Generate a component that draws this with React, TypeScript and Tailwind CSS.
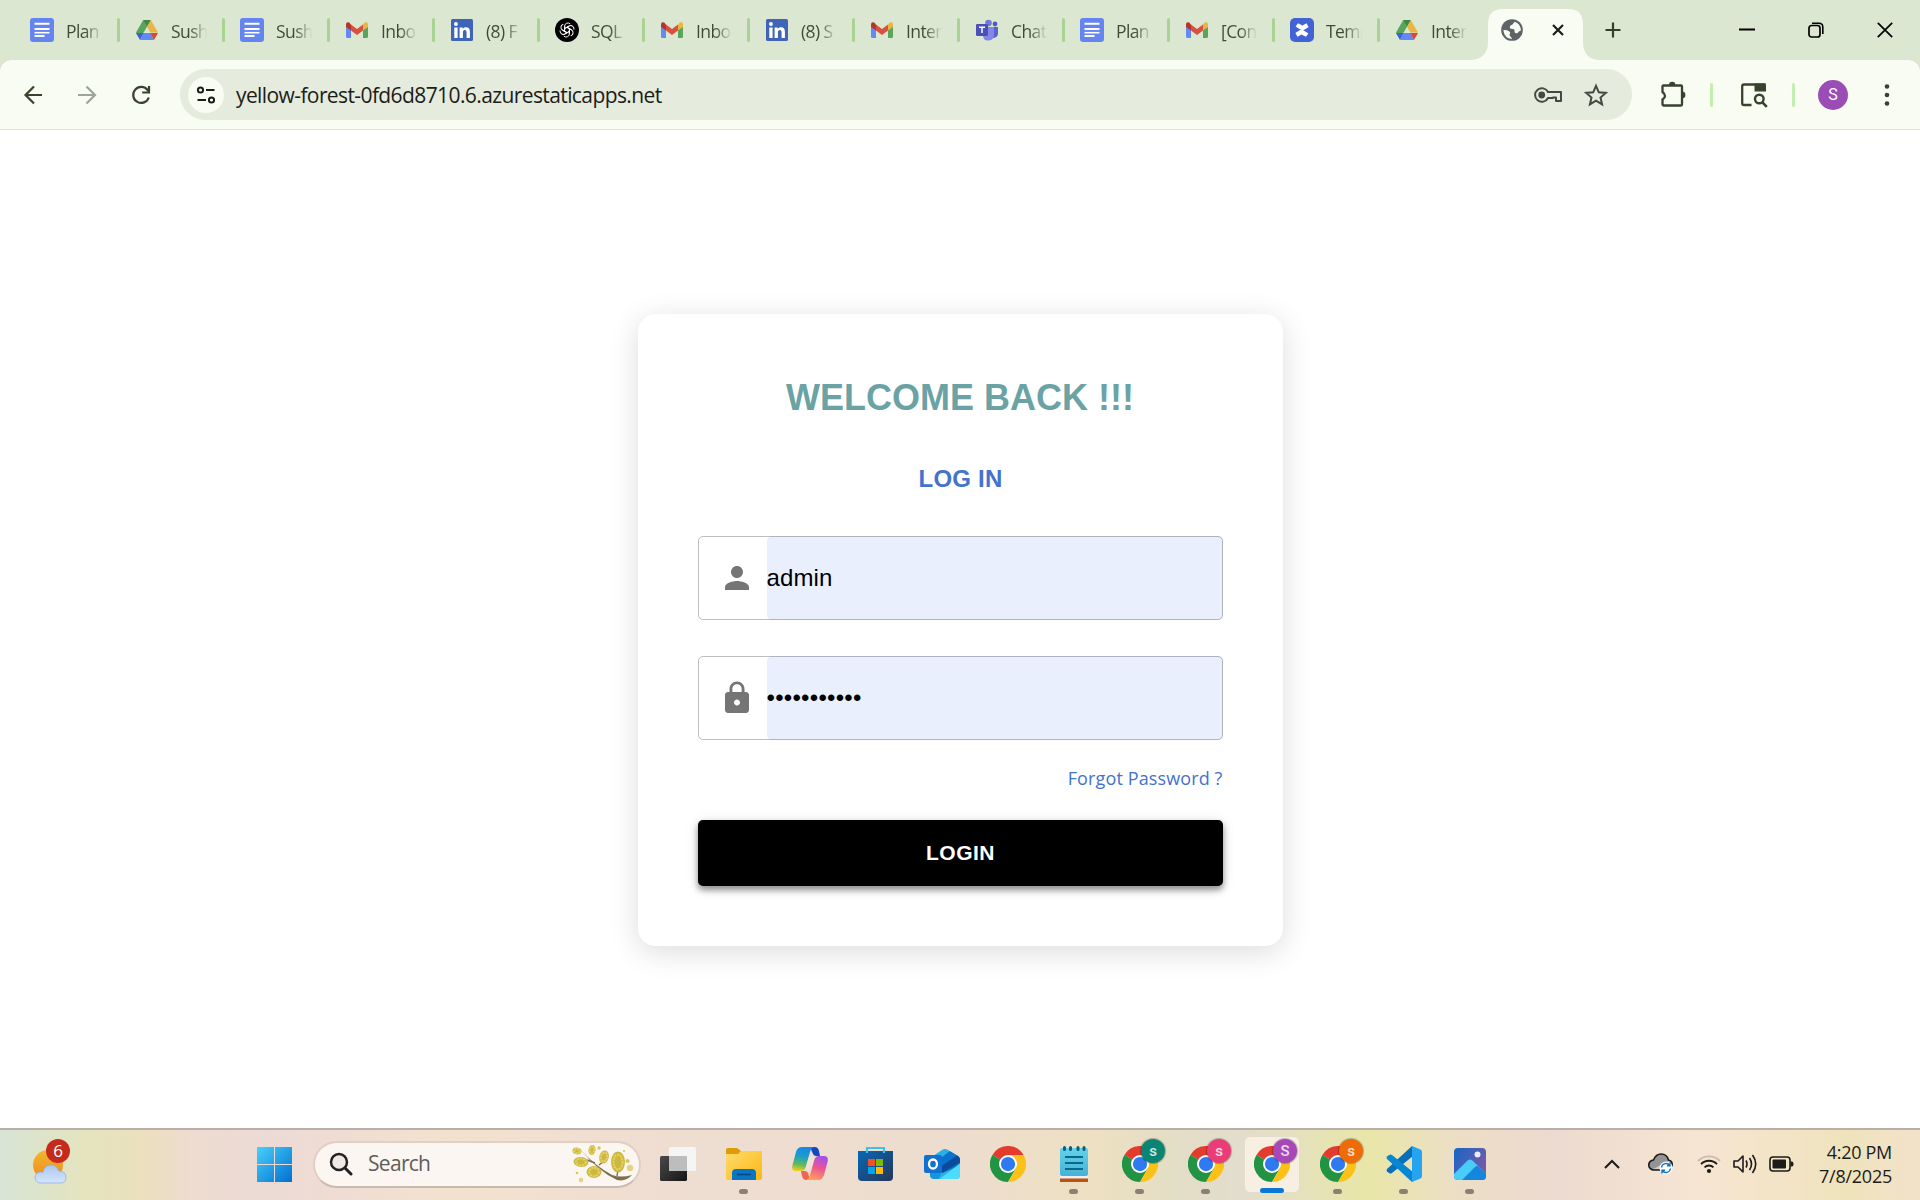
import React from "react";

const Docs = () => (
  <svg width="24" height="24" viewBox="0 0 24 24"><rect width="24" height="24" rx="3" fill="#6485f0" /><path d="M4.500 5.800h15M4.500 11h15M4.500 18h10" stroke="#fff" strokeWidth="2" /><path d="M4.500 14.700h15" stroke="#fff" strokeWidth="1.600" /></svg>
);
const Drive = () => (
  <svg width="24" height="24" viewBox="0 0 24 24">
    <path d="M8.200 2 12 8.800 4.900 21 1 14.500z" fill="#5aa55c" />
    <path d="M8 2h8l-4 7z" fill="#3f8a43" /><path d="M15.800 2 23 14.500h-7.800L12 8.800z" fill="#eab543" />
    <path d="M1 15h7.800L5 22 1 15z" fill="#3c62d8" /><path d="M8.500 15H15.500L19 22H5z" fill="#6389f4" /><path d="M15.200 15H23l-4 7z" fill="#d9483b" />
  </svg>
);
const Gmail = () => (
  <svg width="24" height="24" viewBox="0 0 24 24">
    <path d="M1 8v10.500q0 1.500 1.500 1.500H6V11z" fill="#6389f4" /><path d="M23 8v10.500q0 1.500-1.500 1.500H18V11z" fill="#5aa55c" />
    <path d="M18 6.500 19.800 4.500Q23 3.400 23 6.500V9l-5 3.500z" fill="#eab543" /><path d="M6 6.500 12 11l6-4.500v6L12 17l-6-4.500z" fill="#d9503f" />
    <path d="M1 9V6.500Q1 3.400 4.200 4.500L6 6.500v6z" fill="#b3352c" />
  </svg>
);
const LinkedIn = () => (
  <svg width="24" height="24" viewBox="0 0 24 24"><rect x="1" y="1" width="22" height="22" rx="1.500" fill="#4065b8" /><path d="M4.300 9.500h3.300V20H4.300zM9.600 9.500h3.100v1.400c.7-1.100 1.800-1.700 3.200-1.700 3 0 4 1.800 4 4.800v6h-3.300v-5.500c0-1.600-.5-2.500-1.700-2.500-1.400 0-2 1-2 2.600V20H9.600z" fill="#fff" /><circle cx="5.950" cy="6" r="1.950" fill="#fff" /></svg>
);
const OpenAI = () => (
  <svg width="24" height="24" viewBox="0 0 24 24"><circle cx="12" cy="12" r="12" fill="#000" />
    <g fill="none" stroke="#fff" strokeWidth="1">
      {[0, 60, 120, 180, 240, 300].map((a) => <path key={a} transform={`rotate(${a} 12 12)`} d="M9.600 13.400V8.200a3.300 3.300 0 0 1 5.600-2.300M9.600 10.600 14.300 8" />)}
    </g></svg>
);
const Teams = () => (
  <svg width="24" height="24" viewBox="0 0 24 24"><circle cx="13.500" cy="5" r="3.300" fill="#7378dc" /><circle cx="20" cy="6" r="2.400" fill="#5059c9" />
    <path d="M17 9h6v7q-1 4-5 4z" fill="#5b62cd" /><path d="M8 9h11v8q0 5-5.500 5.500T8 17z" fill="#8388e8" />
    <rect x="1" y="6" width="12" height="12" rx="1.200" fill="#4b50b4" /><path d="M4 9.200h6M7 9.200V15" stroke="#fff" strokeWidth="1.500" /></svg>
);
const Confluence = () => (
  <svg width="24" height="24" viewBox="0 0 24 24"><rect width="24" height="24" rx="5" fill="#4263d6" /><path d="M5.600 8.600 8 5.200l4.500 2.300 4-2.200 2.100 3.600-3.800 2.600q-2.600 1.500-5.300-.4z" fill="#fff" /><path d="M18.400 15.400 16 18.800l-4.500-2.300-4 2.200-2.100-3.600 3.800-2.600q2.600-1.500 5.300.4z" fill="#fff" /></svg>
);
const Globe = () => (
  <svg width="26" height="26" viewBox="0 0 24 24"><circle cx="12" cy="12" r="10" fill="#5f6368" /><path d="M4 12q3.500-.2 5.200 1.200 2 1.300.3 3.300l2.500 3.300v.6Q5 20 4 12zM14.500 4.300q5.500 2 5.700 8.200-2.200.6-3 2.300-1.800.7-3-.9.800-2.500-1.400-2.800l-2.600-.4q-.8-3 2-3.500z" fill="#f8fcf2" /></svg>
);

const tabs: [() => React.ReactElement, string][] = [
  [Docs, "Plan"], [Drive, "Sush"], [Docs, "Sush"], [Gmail, "Inbo"], [LinkedIn, "(8) F"], [OpenAI, "SQL"], [Gmail, "Inbo"],
  [LinkedIn, "(8) S"], [Gmail, "Inter"], [Teams, "Chat"], [Docs, "Plan"], [Gmail, "[Con"], [Confluence, "Temp"], [Drive, "Inter"],
];

function TabStrip() {
  return (
    <div className="flex h-[60px] bg-[#dbe7d0] pl-[15px]">
      {tabs.map(([Icon, label], i) => (
        <div key={i} className="flex h-[60px] w-[105px] shrink-0 items-center pl-[15px]">
          <Icon />
          <div className="ml-3 w-[37px] overflow-hidden whitespace-nowrap bg-linear-to-r from-[#3d4a36] from-50% to-transparent to-98% bg-clip-text pt-[2px] text-[17.5px] leading-6 tracking-[-0.6px] text-transparent">{label}</div>
          {i < 13 && <div className="ml-[14px] h-6 w-[3px] rounded-sm bg-[#a9d392]" />}
        </div>
      ))}
      <svg className="-ml-[13px] shrink-0" width="126" height="60" viewBox="0 0 126 60"><path d="M0 60Q16 58 16 42V24Q16 9 31 9H96Q111 9 111 24V42Q111 58 126 60z" fill="#f8fcf2" /></svg>
      <div className="relative -ml-[126px] flex w-[126px] items-center pl-[27px]">
        <Globe />
        <svg className="ml-[26px]" width="14" height="14" viewBox="0 0 14 14"><path d="m2 2 10 10M12 2 2 12" stroke="#1b1d19" strokeWidth="2.200" /></svg>
      </div>
      <div className="flex grow items-center pl-[6px]">
        <svg width="18" height="18" viewBox="0 0 18 18"><path d="M9 1.500v15M1.500 9h15" stroke="#333f2d" strokeWidth="2.200" /></svg>
        <svg className="ml-[117px]" width="16" height="16" viewBox="0 0 16 16"><path d="M0 7.500h16" stroke="#000" strokeWidth="2" /></svg>
        <svg className="ml-[53px]" width="16" height="16" viewBox="0 0 16 16"><rect x="1" y="3.500" width="11" height="11.500" rx="2.500" fill="none" stroke="#000" strokeWidth="1.700" /><path d="M4 1.200h7q3.800 0 3.800 3.800v7" fill="none" stroke="#000" strokeWidth="1.600" /></svg>
        <svg className="ml-[53px]" width="16" height="16" viewBox="0 0 16 16"><path d="m.8.8 14.400 14.400M15.200.8.8 15.200" stroke="#000" strokeWidth="1.700" /></svg>
      </div>
    </div>
  );
}

function Toolbar() {
  return (
    <div className="bg-[#dbe7d0]">
      <div className="flex h-[70px] items-center rounded-t-[12px] border-b border-[#dee4d7] bg-[#f8fcf2] pl-[22px]">
        <svg width="24" height="24" viewBox="0 0 24 24"><path d="M20 12H4M12 3.500 3.500 12l8.500 8.500" fill="none" stroke="#37432f" strokeWidth="2.200" /></svg>
        <svg className="ml-[29px]" width="24" height="24" viewBox="0 0 24 24"><path d="M3 12h16M11.500 3.500 20 12l-8.500 8.500" fill="none" stroke="#9da498" strokeWidth="2.200" /></svg>
        <svg className="ml-[30px]" width="24" height="24" viewBox="0 0 24 24"><path d="M19.800 14.500a8 8 0 1 1-1.500-7.800l1 1.200M20 3v6.500h-6.800" fill="none" stroke="#37432f" strokeWidth="2.200" /></svg>
        <div className="ml-[27px] flex h-[51px] w-[1452px] items-center rounded-full bg-[#e5ebdd] pl-2">
          <div className="flex size-9 items-center justify-center rounded-full bg-[#f8fcf2]">
            <svg width="20" height="20" viewBox="0 0 20 20" fill="none" stroke="#1b1d19" strokeWidth="2"><circle cx="4.500" cy="5" r="2.600" /><path d="M10 5h8.500M1.500 15H10" /><circle cx="15.500" cy="15" r="2.600" /></svg>
          </div>
          <span className="ml-3 w-[1298px] whitespace-nowrap text-[21px] leading-7 tracking-[-0.6px] text-[#1b1d19]">yellow-forest-0fd6d8710.6.azurestaticapps.net</span>
          <svg className="shrink-0" width="28" height="20" viewBox="0 0 28 20" fill="none" stroke="#454943" strokeWidth="2"><path d="M14 7h13v9h-5v-3.500h-3V13h-5a6.800 6.800 0 1 1 0-6z" strokeLinejoin="round" /><circle cx="7.700" cy="10" r="2.400" fill="#454943" /></svg>
          <svg className="ml-[22px] shrink-0" width="24" height="24" viewBox="0 0 24 24"><path d="m12 2.800 2.800 6.500 7 .6-5.300 4.600 1.600 6.900-6.100-3.700-6.100 3.700 1.600-6.900L2.200 9.900l7-.6z" fill="none" stroke="#454943" strokeWidth="2" /></svg>
        </div>
        <svg className="ml-[27px]" width="27" height="27" viewBox="0 0 27 27"><path d="M4.500 4.500h17.500q1 0 1 1v18q0 1-1 1H4.500q-1 0-1-1v-5q5-3.500 0-7.500v-6q0-.5 1-.5z" fill="none" stroke="#37432f" strokeWidth="2.300" /><path d="M10 4a3.200 3.200 0 0 1 6.400 0zM23 10.500a3.200 3.200 0 0 1 0 6.800z" fill="#37432f" /></svg>
        <div className="ml-6 h-6 w-[3px] rounded bg-[#c4edb0]" />
        <svg className="ml-[27px]" width="28" height="26" viewBox="0 0 28 26"><path d="M11.500 23H4q-1.800 0-1.800-1.800V4.300Q2.200 2.500 4 2.500h20.500V8" fill="none" stroke="#37432f" strokeWidth="2.300" /><path d="M14.500 1.400H24q2 0 2 2v6H14.500z" fill="#37432f" /><circle cx="19.300" cy="17" r="4.300" fill="none" stroke="#37432f" strokeWidth="2.400" /><path d="m22.200 20.200 4.600 4.600" stroke="#37432f" strokeWidth="2.600" /></svg>
        <div className="ml-[24px] h-6 w-[3px] rounded bg-[#c4edb0]" />
        <div className="ml-[23px] flex size-[30px] items-center justify-center rounded-full bg-[#9a4db5] font-['Roboto'] text-[16px] text-white">S</div>
        <svg className="ml-[35px]" width="8" height="24" viewBox="0 0 8 24" fill="#37432f"><circle cx="4" cy="3.500" r="2.300" /><circle cx="4" cy="12" r="2.300" /><circle cx="4" cy="20.500" r="2.300" /></svg>
      </div>
    </div>
  );
}

function Field({ icon, children }: { icon: React.ReactNode; children: React.ReactNode }) {
  return (
    <div className="relative flex h-[84px] font-['Liberation_Sans',sans-serif]">
      <div className="flex w-[69px] items-center pl-[21px]">{icon}</div>
      <div className="flex grow items-center rounded-[5px] bg-[#e9effd] text-[24px] tracking-[0.1px] text-black">{children}</div>
      <div className="absolute inset-0 rounded-[5px] border border-black/25" />
    </div>
  );
}

function LoginCard() {
  return (
    <div className="flex h-[632px] w-[645px] flex-col rounded-[18px] bg-white px-[60px] pt-[60px] shadow-[0_6px_30px_rgba(0,0,0,0.14)]">
      <h1 className="text-center font-['Liberation_Sans',sans-serif] text-[36px] font-bold leading-[48px] text-[#6ba3a4]">WELCOME BACK !!!</h1>
      <h2 className="mt-[39px] pl-px text-center font-['Liberation_Sans',sans-serif] text-[24px] font-bold leading-9 tracking-[0.2px] text-[#4472cd]">LOG IN</h2>
      <div className="mt-[39px] flex flex-col gap-9">
        <Field icon={<svg width="36" height="36" viewBox="0 0 24 24" fill="#757575"><path d="M12 12c2.210 0 4-1.790 4-4s-1.790-4-4-4-4 1.790-4 4 1.790 4 4 4m0 2c-2.670 0-8 1.340-8 4v2h16v-2c0-2.660-5.330-4-8-4" /></svg>}>admin</Field>
        <Field icon={<svg width="36" height="36" viewBox="0 0 24 24" fill="#757575"><path d="M18 8h-1V6c0-2.760-2.240-5-5-5S7 3.240 7 6v2H6c-1.100 0-2 .9-2 2v10c0 1.100.9 2 2 2h12c1.100 0 2-.9 2-2V10c0-1.100-.9-2-2-2m-6 9c-1.100 0-2-.9-2-2s.9-2 2-2 2 .9 2 2-.9 2-2 2M8.900 8V6c0-1.710 1.390-3.100 3.100-3.100s3.100 1.390 3.100 3.100v2z" /></svg>}>
          <span className="tracking-[0.250px]">•••••••••••</span>
        </Field>
      </div>
      <a className="mt-[24px] self-end whitespace-nowrap text-[18px] leading-7 tracking-[0.12px] text-[#4472cd]">Forgot Password ?</a>
      <button className="mt-[28px] h-[66px] shrink-0 rounded-[5px] bg-black pb-px pl-px font-['Liberation_Sans',sans-serif] text-[21px] font-bold tracking-[0.5px] text-white shadow-[0_4px_6px_rgba(0,0,0,0.4),0_2px_14px_rgba(0,0,0,0.12)]">LOGIN</button>
    </div>
  );
}

const Chrome = () => (
  <svg width="36" height="36" viewBox="0 0 48 48">
    <path d="M24 24 3.200 12A24 24 0 0 1 44.800 12z" fill="#e33b2e" /><path d="M24 24 3.200 12A24 24 0 0 0 24 48l10.400-18z" fill="#229342" /><path d="M24 12h20.800A24 24 0 0 1 24 48l10.400-18z" fill="#fbc116" />
    <circle cx="24" cy="24" r="12" fill="#fff" /><circle cx="24" cy="24" r="9.500" fill="#2f7af0" />
  </svg>
);

function ProfileChrome({ color, initial = "s" }: { color: string; initial?: string }) {
  return (
    <div className="relative size-9">
      <Chrome />
      <div className="absolute -top-[7px] left-[19px] flex size-6 items-center justify-center rounded-full font-['Roboto'] text-[15px] font-medium text-white/80 shadow-[0_0_1px_1px_rgba(0,0,0,0.25)]" style={{ backgroundColor: color }}>{initial}</div>
    </div>
  );
}

const Branch = () => {
  const blobs: [number, number, number, number, number][] = [[5, 6, 4.5, 3.3, 10], [20, 5, 3.5, 5, 10], [32, 12, 4.7, 6.7, 15], [9, 17, 7.5, 5, 5], [22, 27, 7.5, 6, 0], [46, 17, 7, 10.5, 0]];
  return (
    <svg width="62" height="38" viewBox="0 0 62 38">
      <path d="M8 4Q22 20 40 30q9 3 20 0-6 7-15 5Q27 27 8 4z" fill="#7d6f4a" /><path d="M15 15l8 3M22 23l-4 3M27 20l5-4M45 31l1-6" stroke="#7d6f4a" strokeWidth="1.400" />
      {blobs.map(([x, y, a, b, r], i) => (
        <g key={i} transform={`rotate(${r} ${x} ${y})`}>
          <ellipse cx={x} cy={y} rx={a} ry={b} fill="#cdb73f" />
          <ellipse cx={x} cy={y} rx={a * 0.65} ry={b * 0.7} fill="none" stroke="#e2d268" strokeWidth="2" strokeDasharray="2.200 .8" />
        </g>
      ))}
      <g fill="#d8c553"><circle cx="58" cy="23" r="3.200" opacity=".7" /><circle cx="55.500" cy="16" r="2" /><circle cx="27" cy="3" r="1.700" /><circle cx="9" cy="35" r="2.300" opacity=".7" /><circle cx="5" cy="28" r="1.300" /><circle cx="52" cy="6" r="1" /></g>
    </svg>
  );
};

const TaskView = () => (
  <svg width="36" height="36" viewBox="0 0 36 36"><defs><linearGradient id="tv" x1="0" y1="0" x2="1" y2="1"><stop stopColor="#4a4a4a" /><stop offset="1" stopColor="#161616" /></linearGradient></defs>
    <rect y="10" width="27" height="25" rx="1.500" fill="url(#tv)" /><rect x="9" y="1" width="27" height="24" rx="1.500" fill="#f5f5f5" /><path d="M9 10h18v15H9z" fill="#bdbdbd" /></svg>
);
const Folder = () => (
  <svg width="36" height="36" viewBox="0 0 36 36"><defs><linearGradient id="fo" x2="1" y2="1"><stop stopColor="#ffdc70" /><stop offset="1" stopColor="#fbb710" /></linearGradient></defs>
    <path d="M0 4q0-2 2-2h9l4 3h19q2 0 2 2v6H0z" fill="#df9b05" /><path d="M0 8h12l3-3h19q2 0 2 2v25q0 2-2 2H2q-2 0-2-2z" fill="url(#fo)" /><path d="M6 34v-7q0-4 4-4h16q4 0 4 4v7z" fill="#0b75c4" /><path d="M11 28.500h14" stroke="#0a477e" strokeWidth="1.600" /></svg>
);
const Copilot = () => (
  <svg width="36" height="36" viewBox="0 0 36 36"><defs>
    <linearGradient id="cp1" x1=".5" y1="0" x2=".35" y2="1"><stop stopColor="#1688e8" /><stop offset=".4" stopColor="#1b9fc8" /><stop offset=".75" stopColor="#65bb58" /><stop offset="1" stopColor="#f3cd20" /></linearGradient>
    <linearGradient id="cp2" x1=".7" y1="0" x2=".4" y2="1"><stop stopColor="#a050f0" /><stop offset=".5" stopColor="#ed5592" /><stop offset="1" stopColor="#ffa055" /></linearGradient></defs>
    <path d="M18 1h5q3 0 4 4l1 5h-4q-2 0-3-2z" fill="#1846c0" /><path d="M18 34h-4q-3 0-4-4l-1-5h4q2 0 3 2z" fill="#ef6650" />
    <path d="M10 1h12q-3 1-4 5l-4 14q-1 5-5 5H4Q-1 25 .500 19L4 6q1.500-5 6-5z" fill="url(#cp1)" />
    <path d="M26 34H14q3-1 4-5l4-14q1-5 5-5h5q5 0 3.500 6L32 29q-1.500 5-6 5z" fill="url(#cp2)" />
    <path d="M17 11h5.500L19 23h-5.500z" fill="#f0e2d8" /></svg>
);
const Store = () => (
  <svg width="36" height="36" viewBox="0 0 36 36"><defs><linearGradient id="st" x2="1" y2="1"><stop stopColor="#0868b8" /><stop offset="1" stopColor="#263555" /></linearGradient></defs>
    <path d="M0 5h35v26q0 4-4 4H4q-4 0-4-4z" fill="url(#st)" /><path d="M9 7V2h17v5" fill="none" stroke="#3cc0f0" strokeWidth="2.200" /><path d="M10 13h7v7h-7z" fill="#f25022" /><path d="M18 13h7v7h-7z" fill="#7fba00" /><path d="M10 21h7v7h-7z" fill="#00a4ef" /><path d="M18 21h7v7h-7z" fill="#ffb900" /></svg>
);
const Outlook = () => (
  <svg width="36" height="36" viewBox="0 0 36 36"><defs><clipPath id="olc"><path d="M6 12 18 4q3-2 6 0l10 6q2 1.500 2 4v15q0 4-4 4H11q-5 0-5-4z" /></clipPath></defs>
    <g clipPath="url(#olc)"><path d="M0 0h36v36H0z" fill="#2caee8" /><path d="M12 16 27 4l11 7v8L18 27z" fill="#0a72cc" /><path d="M16 21 34 9l4 6-20 12z" fill="#0c4a9c" /><path d="m14 34 24-18v18z" fill="#4bdcff" /><path d="M6 22l12 4-4 8H6z" fill="#1496dd" /></g>
    <rect y="9" width="18" height="18" rx="2" fill="#1271ce" /><ellipse cx="9" cy="18" rx="4" ry="4.500" fill="none" stroke="#fff" strokeWidth="2.300" /></svg>
);
const Notepad = () => (
  <svg width="36" height="36" viewBox="0 0 36 36"><defs><linearGradient id="np" x2="0" y2="1"><stop stopColor="#62d3ec" /><stop offset="1" stopColor="#47b2d4" /></linearGradient></defs>
    <path d="M4 32h28v4H4z" fill="#b85410" /><path d="M4 29h28v3.500H4z" fill="#eee" /><rect x="4" y="2" width="28" height="28" rx="2" fill="url(#np)" /><path d="M9 11h18M9 17h18M9 23h18" stroke="#08678e" strokeWidth="1.900" /><path d="M8.500 1.500v2M14.500 1.500v2M22 1.500v2M28 1.500v2" stroke="#155b78" strokeWidth="3" strokeLinecap="round" /></svg>
);
const VSCode = () => (
  <svg width="36" height="36" viewBox="0 0 36 36"><path d="M27 10 6 27q-1.500 1-3 0L1 25.500q-1-1.200 0-2.500L26 0z" fill="#0870b8" /><path d="M27 26 6 9Q4.500 8 3 9L1 10.500q-1 1.200 0 2.500L26 36z" fill="#0787d2" /><path d="M26 0l8.500 3.500Q36 4.300 36 6v24q0 1.700-1.500 2.500L26 36z" fill="#25a4f2" /></svg>
);
const Photos = () => (
  <svg width="34" height="34" viewBox="0 0 34 34"><defs><linearGradient id="ph" x2="1" y2=".6"><stop stopColor="#0f68c8" /><stop offset="1" stopColor="#7b58a8" /></linearGradient><clipPath id="phc"><rect x="1" y="1" width="32" height="32" rx="4" /></clipPath></defs>
    <g clipPath="url(#phc)"><path d="M0 0h34v34H0z" fill="url(#ph)" /><path d="M0 28 14 14q3-3 6 0l14 14v6H0z" fill="#48cdf6" /><path d="m8 34 14-14q2-2 4 0l8 8v6z" fill="#1685dc" /></g><circle cx="24.500" cy="7.500" r="3" fill="#e8edfb" /></svg>
);

function Slot({ children, mark }: { children: React.ReactNode; mark?: "dot" | "active" }) {
  return (
    <div className={mark === "active" ? "relative flex h-[57px] w-14 items-center justify-center rounded-md border border-[#e6dccb] bg-[#f6efe2]" : "relative flex h-[57px] w-14 items-center justify-center"}>
      {children}
      {mark === "dot" && <div className="absolute -bottom-px left-[23px] h-[5px] w-[9px] rounded-full bg-[#8a8073]" />}
      {mark === "active" && <div className="absolute -bottom-px left-[15px] h-[5px] w-6 rounded-full bg-[#0c76d4]" />}
    </div>
  );
}

function Taskbar() {
  return (
    <div className="flex h-[72px] items-center border-t-2 border-[#b9afa8] bg-[linear-gradient(90deg,#d8e4d6_0px,#e5e4bd_90px,#ecdfbf_150px,#eddcd0_190px,#ecdad6_270px,#f3e1cf_450px,#efddd2_660px,#edddce_960px,#eee0c2_1090px,#e4dec6_1170px,#e2ddcd_1240px,#e9e6a8_1370px,#ecdfc4_1450px,#ecdad0_1550px,#f6e5d2_1700px,#efe3bc_1850px,#f2e2cb_1920px)] pb-[2px] text-[#1d1b19]">
      <div className="relative ml-[33px] h-[46px] w-[38px] -translate-y-[2px]">
        <svg width="38" height="46" viewBox="0 0 38 46"><defs><linearGradient id="sun" x2="0" y2="1"><stop stopColor="#efb82d" /><stop offset="1" stopColor="#f5871f" /></linearGradient><linearGradient id="cl" x2="0" y2="1"><stop stopColor="#a9c7f2" /><stop offset="1" stopColor="#d6e5fb" /></linearGradient></defs><circle cx="15" cy="26" r="15" fill="url(#sun)" /><path d="M8 44a5.500 5.500 0 0 1-1-11q2 0 3 .5 1-7.500 8-7.500 6 0 7.500 6 7.500 0 7.500 6.500 0 5.500-5.500 5.500z" fill="url(#cl)" stroke="#8fb1e6" strokeWidth=".8" /></svg>
        <div className="absolute left-[13px] top-0 flex size-6 items-center justify-center rounded-full bg-[#c42b1c] text-[17px] font-medium text-white">6</div>
      </div>
      <svg className="ml-[186px]" width="35" height="35" viewBox="0 0 35 35"><defs><linearGradient id="win" gradientUnits="userSpaceOnUse" x1="0" y1="0" x2="35" y2="35"><stop stopColor="#48d0fb" /><stop offset="1" stopColor="#0070d0" /></linearGradient></defs><path d="M0 0h17v17H0zM18 0h17v17H18zM0 18h17v17H0zM18 18h17v17H18z" fill="url(#win)" /></svg>
      <div className="ml-[21px] flex h-[47px] w-[328px] items-center rounded-full border-2 border-[#e2cfc4] border-b-[#cbbab0] bg-[#fbf6f2] pl-[14px]">
        <svg width="24" height="24" viewBox="0 0 24 24"><circle cx="10" cy="10" r="8" fill="#eee9e6" stroke="#222" strokeWidth="2.500" /><path d="m16 16 6 6" stroke="#222" strokeWidth="3" strokeLinecap="round" /></svg>
        <span className="ml-[15px] w-[204px] text-[21px] tracking-[-0.7px] text-[#605d5a]">Search</span>
        <Branch />
      </div>
      <div className="ml-[9px] flex gap-[10px]">
        <Slot><TaskView /></Slot><Slot mark="dot"><Folder /></Slot><Slot><Copilot /></Slot><Slot><Store /></Slot><Slot><Outlook /></Slot><Slot><Chrome /></Slot><Slot mark="dot"><Notepad /></Slot>
        <Slot mark="dot"><ProfileChrome color="#0b8573" /></Slot><Slot mark="dot"><ProfileChrome color="#ea3d78" /></Slot><Slot mark="active"><ProfileChrome color="#a847b8" initial="S" /></Slot><Slot mark="dot"><ProfileChrome color="#ee6b05" /></Slot>
        <Slot mark="dot"><VSCode /></Slot><Slot mark="dot"><Photos /></Slot>
      </div>
      <div className="ml-auto flex items-center pr-[28px]">
        <svg width="16" height="16" viewBox="0 0 16 16"><path d="m1 12 7-7 7 7" fill="none" stroke="#1d1b19" strokeWidth="2" /></svg>
        <svg className="ml-[28px]" width="26" height="22" viewBox="0 0 26 22"><path d="M6 17a5 5 0 0 1-.5-10Q8 1 13 1q6 0 7.500 6Q25 8 24 13l-3 4z" fill="#949494" stroke="#1d1b19" strokeWidth="1.600" /><path d="m5 16 16-8 3 4-3 4z" fill="#ccc" /><circle cx="18" cy="15" r="6.500" fill="#fff" /><path d="M13.500 14.500a4.600 4.600 0 0 1 8.300-2M22.500 15.500a4.600 4.600 0 0 1-8.300 2M22 9.500v3.200h-3M14 20.500v-3.200h3" fill="none" stroke="#1173c6" strokeWidth="1.400" /></svg>
        <svg className="ml-[23px]" width="24" height="22" viewBox="0 0 24 22" fill="none" strokeWidth="1.800"><path d="M1 8a15.500 15.500 0 0 1 22 0" stroke="#c7bcae" /><path d="M4 11.200a11 11 0 0 1 16 0M7.500 14.300a6.500 6.500 0 0 1 9 0" stroke="#1d1b19" /><circle cx="12" cy="18" r="2.100" fill="#1d1b19" /></svg>
        <svg className="ml-[12px]" width="24" height="22" viewBox="0 0 24 22" fill="none" stroke="#1d1b19" strokeWidth="1.600"><path d="M1 8h4l5-5v16l-5-5H1z" strokeLinejoin="round" /><path d="M13 7.500q2 3.500 0 7M16.500 5q4 6 0 12M19.500 2q6.500 9 0 18" /></svg>
        <svg className="ml-[12px]" width="25" height="18" viewBox="0 0 25 18"><rect x="1" y="2" width="20" height="14" rx="3" fill="none" stroke="#1d1b19" strokeWidth="1.600" /><rect x="3.500" y="4.500" width="13.500" height="9" rx="1" fill="#1d1b19" /><path d="M21.500 6.500H23q1.500 0 1.500 2.500T23 11.500h-1.500z" fill="#1d1b19" /></svg>
        <div className="ml-[24px] w-[74px] whitespace-nowrap text-right text-[18px] leading-6"><div className="tracking-[-0.300px]">4:20 PM</div><div className="tracking-[-0.250px]">7/8/2025</div></div>
      </div>
    </div>
  );
}

export default function App() {
  return (
    <div className="flex h-[1200px] w-[1920px] flex-col overflow-hidden bg-white font-['Open_Sans','Noto_Sans',sans-serif]">
      <TabStrip />
      <Toolbar />
      <main className="flex grow items-start justify-center pt-[184px]"><LoginCard /></main>
      <Taskbar />
    </div>
  );
}
